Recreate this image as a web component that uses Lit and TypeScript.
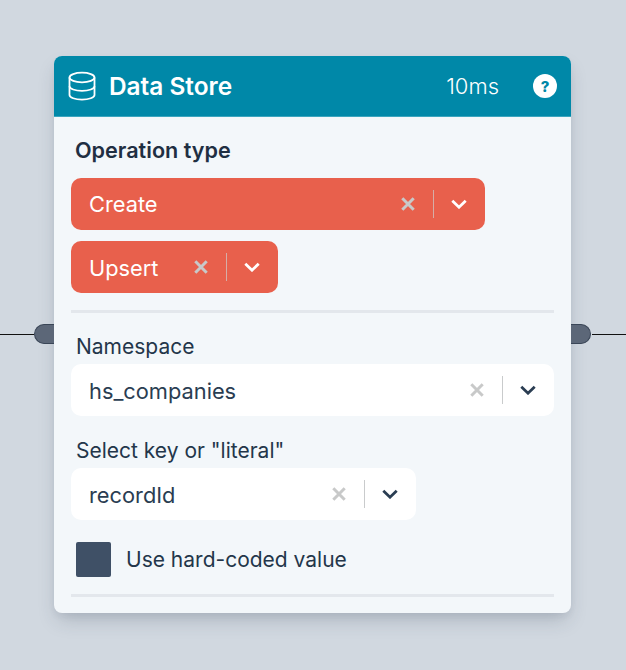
import { LitElement, html, css } from "lit";
import { customElement } from "lit/decorators.js";

const X = html`<svg class="x" viewBox="0 0 14 14" width="14" height="14"><path d="M1.300 1.300L12.700 12.700M12.700 1.300L1.300 12.700" stroke="currentColor" stroke-width="3" fill="none"/></svg>`;
const CHEV = html`<svg class="chev" viewBox="0 0 16 10" width="16" height="10"><path d="M1.300 1.800L8 8.200L14.700 1.800" stroke="currentColor" stroke-width="2.800" fill="none"/></svg>`;

@customElement("app-root")
export class AppRoot extends LitElement {
  static styles = css`
    :host { display: block; width: 626px; height: 670px; background: #d1d8e0; font-family: Inter, "Liberation Sans", sans-serif; color: #1f2f42; overflow: hidden; position: relative; }
    .stage { padding: 56px 55px 0 54px; }
    .wire { position: absolute; top: 334px; height: 1px; background: #111; }
    .wire.l { left: 0; width: 34px; }
    .wire.r { right: 0; width: 34px; }
    .handle { position: absolute; top: 324px; width: 20px; height: 20px; box-sizing: border-box; background: #5c6778; border: 1px solid #3a4657; }
    .handle.l { left: 34px; border-radius: 10px 0 0 10px; border-right: 0; }
    .handle.r { left: 571px; border-radius: 0 10px 10px 0; border-left: 0; }
    .card { position: relative; width: 517px; height: 557px; background: #f3f7fa; border-radius: 8px; box-shadow: 0 10px 20px -4px rgba(40,55,75,.22), 0 4px 8px -2px rgba(40,55,75,.08); overflow: hidden; }
    .head { height: 61px; box-sizing: border-box; background: #0088a8; border-bottom: 1px solid #3aa5be; display: flex; align-items: center; padding: 0 14px; color: #fff; }
    .title { font-size: 24.400px; font-weight: 600; margin-left: 13px; flex: 1; line-height: 30px; }
    .ms { font-size: 22px; font-weight: 300; margin-right: 34px; }
    .help { width: 24px; height: 24px; border-radius: 50%; background: #fff; color: #0088a8; font-size: 15px; font-weight: 800; display: flex; align-items: center; justify-content: center; }
    .body { padding: 19px 17px 0; display: flex; flex-direction: column; }
    .h2 { font-size: 21.600px; font-weight: 600; line-height: 29px; padding-left: 4px; }
    .sel { display: flex; align-items: center; height: 52px; border-radius: 10px; box-sizing: border-box; padding-left: 18px; font-size: 21.800px; background: #fff; color: #2a3d52; }
    .sel .val { flex: 1; }
    .sel.low .val { padding-top: 2px; }
    .sel .x { color: #c8c9c9; margin-right: 18px; }
    .sel .sep { width: 1px; height: 28px; background: #c9cbcc; }
    .sel .chev { margin: 0 18px 0 17px; color: #2a3d52; }
    .tag { background: #e8604c; color: #fff; }
    .tag .chev { color: #fff; }
    .tag .sep { background: #d6ada6; }
    .hr { height: 3px; background: #e3e7ec; margin-top: 17px; }
    .label { font-size: 21px; line-height: 28px; padding-left: 5px; color: #23364a; margin-top: 20px; }
    .label.next { margin-top: 21px; }
    .check { display: flex; align-items: center; padding-left: 5px; margin-top: 22px; font-size: 21px; color: #23364a; }
    .box { width: 35px; height: 35px; background: #3f5066; border-radius: 2px; margin-right: 15px; }
    .create { width: 414px; margin-top: 13px; }
    .upsert { width: 207px; margin-top: 11px; }
    .field { margin-top: 3px; }
    .short { width: 345px; }
  `;
  render() {
    return html`
      <div class="wire l"></div><div class="wire r"></div>
      <div class="stage">
        <div class="card">
          <div class="head">
            <svg width="28" height="30" viewBox="0 0 28 30" fill="none" stroke="#fff" stroke-width="1.800"><ellipse cx="14" cy="6.500" rx="12.500" ry="4.800"/><path d="M1.500 6.500V24c0 2.600 5.600 4.600 12.500 4.600S26.500 26.600 26.500 24V6.500"/><path d="M1.500 15.200c0 2.600 5.600 4.600 12.500 4.600s12.500-2 12.500-4.600"/></svg>
            <span class="title">Data Store</span>
            <span class="ms">10ms</span>
            <span class="help">?</span>
          </div>
          <div class="body">
            <div class="h2">Operation type</div>
            <div class="sel tag create"><span class="val">Create</span>${X}<span class="sep"></span>${CHEV}</div>
            <div class="sel tag upsert low"><span class="val">Upsert</span>${X}<span class="sep"></span>${CHEV}</div>
            <div class="hr"></div>
            <div class="label">Namespace</div>
            <div class="sel field low"><span class="val">hs_companies</span>${X}<span class="sep"></span>${CHEV}</div>
            <div class="label next">Select key or "literal"</div>
            <div class="sel field short low"><span class="val">recordId</span>${X}<span class="sep"></span>${CHEV}</div>
            <div class="check"><span class="box"></span>Use hard-coded value</div>
            <div class="hr"></div>
          </div>
        </div>
      </div>
      <div class="handle l"></div><div class="handle r"></div>
    `;
  }
}
